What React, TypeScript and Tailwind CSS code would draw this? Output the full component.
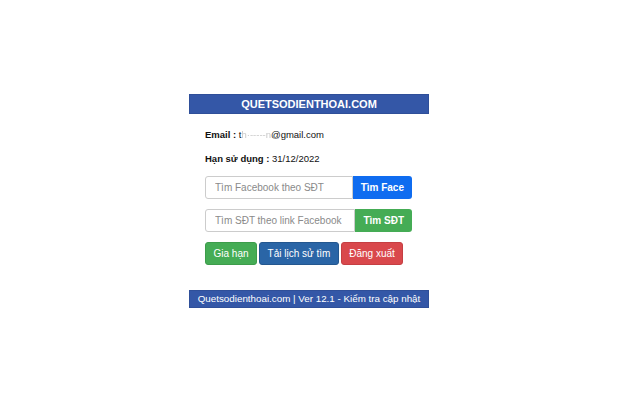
import React from "react";

const font = { fontFamily: '"Liberation Sans", Arial, sans-serif' };

export default function App() {
  return (
    <div className="w-[640px] h-[400px] bg-white pt-[94px] pl-[189px]" style={font}>
      <div className="w-[240px]">
        <div className="h-[20px] bg-[#3457a7] border border-[#2f4f99] text-white font-bold text-[11px] flex items-center justify-center">
          QUETSODIENTHOAI.COM
        </div>
        <div className="px-[16px] pt-[14px] text-[9.5px] text-[#111]">
          <div className="h-[14px] leading-[14px]">
            <b>Email :</b> t
            <span className="text-[#c8c8c8] blur-[0.6px]">h·-----n</span>
            @gmail.com
          </div>
          <div className="h-[14px] leading-[14px] mt-[10px]">
            <b>Hạn sử dụng :</b> 31/12/2022
          </div>
          <div className="mt-[10px] flex w-[207px] h-[23px]">
            <input
              className="flex-1 min-w-0 border border-[#ccc] rounded-l-[3px] px-[9px] text-[10px] placeholder:text-[#8a8a8a] outline-none"
              placeholder="Tìm Facebook theo SĐT"
            />
            <button className="px-[8px] bg-[#0f6cf0] text-white font-bold text-[10px] rounded-r-[3px]">
              Tìm Face
            </button>
          </div>
          <div className="mt-[10px] flex w-[207px] h-[23px]">
            <input
              className="flex-1 min-w-0 border border-[#ccc] rounded-l-[3px] px-[9px] text-[10px] placeholder:text-[#8a8a8a] outline-none"
              placeholder="Tìm SĐT theo link Facebook"
            />
            <button className="px-[8px] bg-[#45ac55] text-white font-bold text-[10px] rounded-r-[3px]">
              Tìm SĐT
            </button>
          </div>
          <div className="mt-[10px] flex gap-[2px] h-[23px]">
            <button className="w-[52px] bg-[#45ac55] border border-[#3d9c4b] text-white text-[10px] rounded-[3px]">
              Gia hạn
            </button>
            <button className="w-[80px] bg-[#2a65a6] border border-[#24578f] text-white text-[10px] rounded-[3px]">
              Tải lịch sử tìm
            </button>
            <button className="w-[62px] bg-[#d9484c] border border-[#c53f43] text-white text-[10px] rounded-[3px]">
              Đăng xuất
            </button>
          </div>
        </div>
        <div className="mt-[25px] h-[18px] bg-[#3457a7] border border-[#2f4f99] text-white text-[9.8px] flex items-center justify-center">
          Quetsodienthoai.com | Ver 12.1 - Kiểm tra cập nhật
        </div>
      </div>
    </div>
  );
}
